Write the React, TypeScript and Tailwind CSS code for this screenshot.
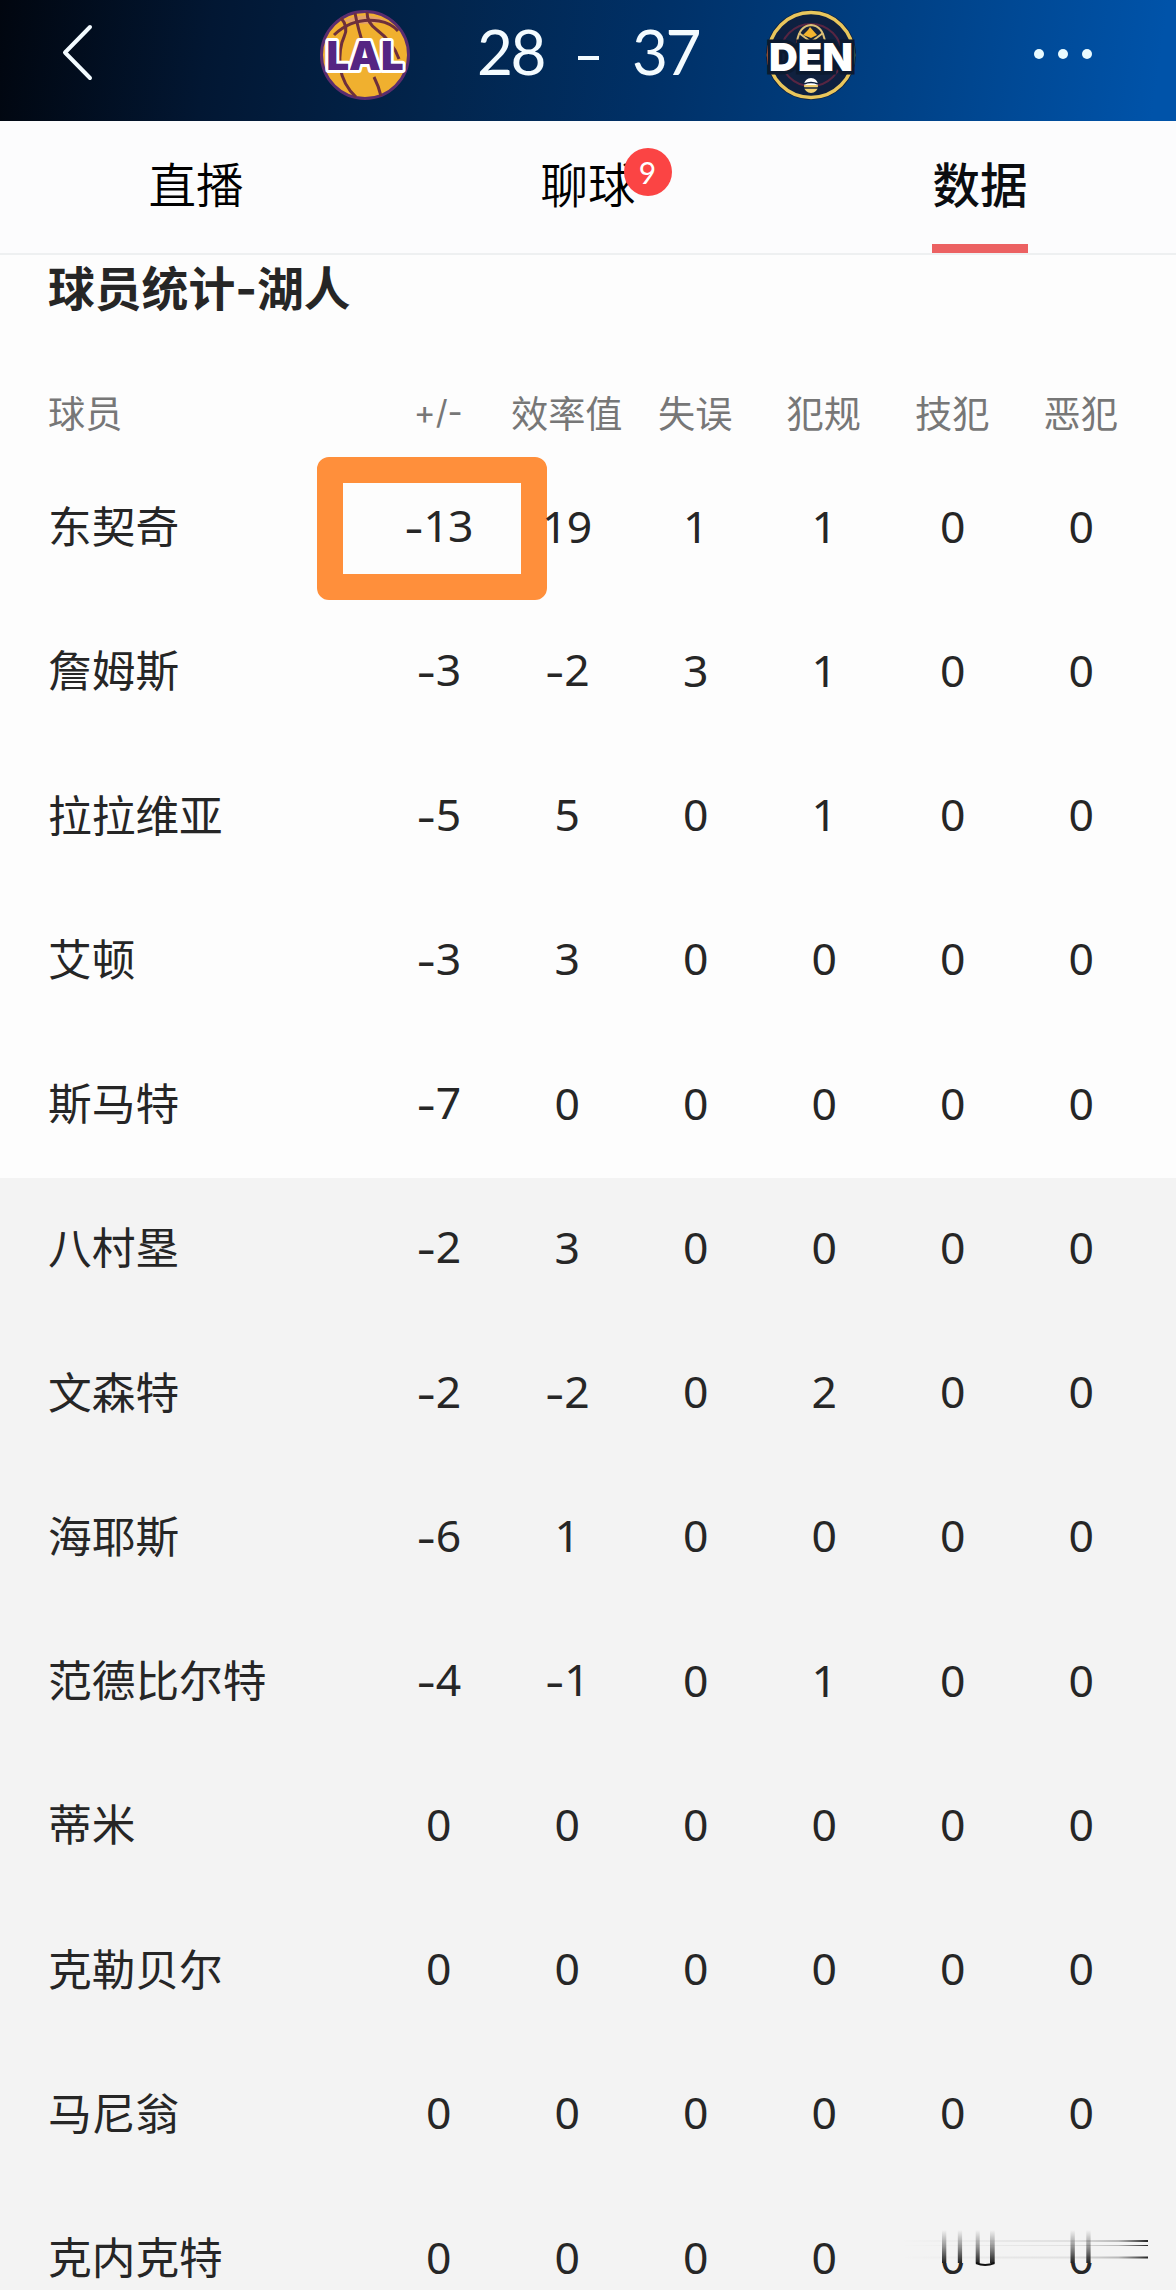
import clsx from "clsx";

/* -------------------------------------------------
   Data
   ------------------------------------------------- */
interface PlayerRow {
  name: string;
  stats: number[];
}

const columns = ["+/-", "效率值", "失误", "犯规", "技犯", "恶犯"];

const starters: PlayerRow[] = [
  { name: "东契奇", stats: [-13, 19, 1, 1, 0, 0] },
  { name: "詹姆斯", stats: [-3, -2, 3, 1, 0, 0] },
  { name: "拉拉维亚", stats: [-5, 5, 0, 1, 0, 0] },
  { name: "艾顿", stats: [-3, 3, 0, 0, 0, 0] },
  { name: "斯马特", stats: [-7, 0, 0, 0, 0, 0] },
];

const bench: PlayerRow[] = [
  { name: "八村塁", stats: [-2, 3, 0, 0, 0, 0] },
  { name: "文森特", stats: [-2, -2, 0, 2, 0, 0] },
  { name: "海耶斯", stats: [-6, 1, 0, 0, 0, 0] },
  { name: "范德比尔特", stats: [-4, -1, 0, 1, 0, 0] },
  { name: "蒂米", stats: [0, 0, 0, 0, 0, 0] },
  { name: "克勒贝尔", stats: [0, 0, 0, 0, 0, 0] },
  { name: "马尼翁", stats: [0, 0, 0, 0, 0, 0] },
  { name: "克内克特", stats: [0, 0, 0, 0, 0, 0] },
];

const tabs = [
  { label: "直播" },
  { label: "聊球", badge: 9 },
  { label: "数据", active: true },
];

/* -------------------------------------------------
   Logos
   ------------------------------------------------- */
const LakersLogo = () => (
  <svg className="h-[92px] w-[92px]" viewBox="0 0 92 92">
    <circle cx="46" cy="46" r="43.5" fill="#f0b02f" stroke="#5b2d6e" strokeWidth="3" />
    <path d="M24 12 Q46 1 68 12 Q46 18 24 12Z" fill="#e3a068" />
    <g fill="none" stroke="#6d2f3c" strokeWidth="3">
      <path d="M15 26 Q34 8 60 12 Q72 14 79 22" />
      <path d="M22 9 Q30 18 25 28 Q20 38 21 58 Q24 76 37 88" />
      <path d="M36 4 Q39 20 45 38 M55 68 Q60 78 62 87" />
      <path d="M48 3 Q48 14 58 21 Q74 33 80 50" />
    </g>
    <text
      x="46"
      y="61"
      textAnchor="middle"
      textLength="77"
      lengthAdjust="spacingAndGlyphs"
      fontSize="40"
      fontWeight="900"
      fill="#552583"
      stroke="#fff"
      strokeWidth="6"
      strokeLinejoin="round"
      paintOrder="stroke"
      className="font-[Inter,sans-serif]"
    >
      LAL
    </text>
  </svg>
);

const NuggetsLogo = () => (
  <svg className="h-[92px] w-[92px]" viewBox="0 0 92 92">
    <circle cx="46" cy="46" r="45" fill="#0e2040" />
    <circle cx="46" cy="46" r="42.5" fill="none" stroke="#e9c65c" strokeWidth="3.5" />
    <circle cx="46" cy="46" r="31" fill="#10213f" stroke="#572542" strokeWidth="2" />
    <path d="M32 33 Q34 17 46 16 Q58 17 60 33 L46 39Z" fill="#17233a" stroke="#dcc077" strokeWidth="2" />
    <path d="M34 24 L46 33 L58 24" fill="none" stroke="#dcc077" strokeWidth="2" />
    <path d="M38 26 L43 21 L45 18 L52 26 L46 29Z" fill="#f4b52f" />
    <circle cx="46" cy="77" r="7" fill="#f0cf70" />
    <path d="M39 76 A7 7 0 0 1 53 76Z" fill="#fff" />
    <path d="M39 75 Q46 72 53 75 M39 79 H53" fill="none" stroke="#10213f" strokeWidth="1.4" />
    <text
      x="46"
      y="61.5"
      textAnchor="middle"
      textLength="84"
      lengthAdjust="spacingAndGlyphs"
      fontSize="39"
      fontWeight="900"
      fill="#fff"
      stroke="#0c1a30"
      strokeWidth="7"
      paintOrder="stroke"
      className="font-[Inter,sans-serif]"
    >
      DEN
    </text>
  </svg>
);

/* -------------------------------------------------
   Header + tabs
   ------------------------------------------------- */
const ScoreHeader = () => (
  <header className="flex h-[121px] items-start bg-[linear-gradient(98deg,#01060f_0%,#021733_18%,#02254d_38%,#003066_55%,#004084_75%,#0053a9_98%)] text-[#f3fbff]">
    <svg className="mt-[23px] ml-[60px] h-[60px] w-[36px]" viewBox="0 0 36 60" fill="none" stroke="currentColor" strokeWidth="4" strokeLinecap="round" strokeLinejoin="round">
      <path d="M30 4 L5 29.5 L30 55" />
    </svg>
    <div className="mt-[9px] ml-[223px] flex w-[538px] items-start justify-between">
      <LakersLogo />
      <div className="flex h-[84px] w-[222px] items-center justify-between font-[Lato,sans-serif] text-[62px] tracking-[-2.5px]">
        <span>28</span>
        <span className="h-[4px] w-[21px] translate-y-[7px] bg-[#f3fbff]" />
        <span>37</span>
      </div>
      <NuggetsLogo />
    </div>
    <div className="mt-[49px] ml-[177px] flex gap-[14px]">
      <span className="h-[10px] w-[10px] rounded-full bg-[#e9fbff]" />
      <span className="h-[10px] w-[10px] rounded-full bg-[#e9fbff]" />
      <span className="h-[10px] w-[10px] rounded-full bg-[#e9fbff]" />
    </div>
  </header>
);

const TabBar = () => (
  <nav className="grid h-[134px] grid-cols-3 border-b-2 border-[#eef0f1] bg-[#fcfcfd]">
    {tabs.map((t) => (
      <div key={t.label} className="flex flex-col items-center justify-between">
        <div className="relative mt-[27px]">
          <span
            className={clsx(
              "block text-[47.5px] leading-[70px]",
              t.active ? "font-medium text-[#0b0d10]" : "font-[350] text-black"
            )}
          >
            {t.label}
          </span>
          {t.badge && (
            <span className="absolute top-0 left-[83px] flex h-[48px] w-[48px] items-center justify-center rounded-full bg-[#fb4444] font-[Lato,sans-serif] text-[30px] text-white">
              {t.badge}
            </span>
          )}
        </div>
        {t.active && <span className="h-[9px] w-[96px] bg-[#ec6162]" />}
      </div>
    ))}
  </nav>
);

/* -------------------------------------------------
   Stats table
   ------------------------------------------------- */
const StatValue = ({ value }: { value: number }) => (
  <span className="relative -top-[3px] font-['Noto_Sans',sans-serif] text-[44.5px] tracking-[-0.8px]">
    {value < 0 && <span className="relative top-[3px] font-[Inter,sans-serif]">-</span>}
    {Math.abs(value)}
  </span>
);

const Row = ({ row, highlight }: { row: PlayerRow; highlight?: boolean }) => (
  <div className="flex h-[144.25px] items-center pl-[48px] text-[#262626]">
    <span className="w-[326px] -translate-y-[4px] text-[43.7px]">{row.name}</span>
    {row.stats.map((s, i) => (
      <span key={i} className="relative flex h-[60px] w-[128.5px] items-center justify-center">
        {highlight && i === 0 && (
          <span className="absolute -top-[42px] -left-[57px] h-[143px] w-[230px] rounded-[12px] border-[26.5px] border-[#ff8f3b]" />
        )}
        <StatValue value={s} />
      </span>
    ))}
  </div>
);

// smeared strokes over the last two cells
const Smear = () => (
  <svg className="absolute top-[2224px] left-[896px] h-[46px] w-[256px]" viewBox="896 2224 256 46">
    <defs>
      <linearGradient id="fall" x1="0" y1="2230" x2="0" y2="2263" gradientUnits="userSpaceOnUse">
        <stop offset="0" stopColor="#222" stopOpacity="0" />
        <stop offset="0.5" stopColor="#222" stopOpacity="0.45" />
        <stop offset="1" stopColor="#222" />
      </linearGradient>
      <linearGradient id="run" x1="900" y1="0" x2="1148" y2="0" gradientUnits="userSpaceOnUse">
        <stop offset="0" stopColor="#333" stopOpacity="0" />
        <stop offset="0.7" stopColor="#333" stopOpacity="0.1" />
        <stop offset="0.88" stopColor="#222" stopOpacity="0.28" />
        <stop offset="1" stopColor="#000" stopOpacity="0.85" />
      </linearGradient>
    </defs>
    <rect x="900" y="2228" width="248" height="35" fill="#f3f3f3" />
    <g fill="url(#run)">
      <rect x="900" y="2240" width="248" height="2" />
      <rect x="900" y="2245" width="248" height="1" />
      <rect x="900" y="2256.5" width="248" height="2" />
    </g>
    <g fill="url(#fall)">
      <rect x="942" y="2230" width="4.3" height="33" />
      <rect x="957.8" y="2230" width="4.3" height="33" />
      <rect x="975.7" y="2230" width="4" height="33" />
      <rect x="990" y="2230" width="4.7" height="33" />
      <rect x="1070.5" y="2230" width="4.3" height="33" />
      <rect x="1086.3" y="2230" width="4.3" height="33" />
    </g>
    <path d="M976 2263 Q985 2267 994.5 2263" fill="none" stroke="#111" strokeWidth="2" />
  </svg>
);

/* -------------------------------------------------
   Main Page
   ------------------------------------------------- */
export default function App() {
  return (
    <div className="relative h-[2290px] w-[1176px] overflow-hidden bg-[#fdfdfd] font-['Noto_Sans_CJK_SC',sans-serif]">
      <ScoreHeader />
      <TabBar />

      <section>
        <h2 className="h-[62px] pl-[48px] text-[46.8px] leading-[62px] font-bold text-[#262626]">
          球员统计<span className="font-[Inter,sans-serif]">-</span>湖人
        </h2>
        <div className="mt-[65px] flex h-[75.75px] items-start pl-[48px] text-[37.2px] leading-[60px] text-[#777]">
          <span className="w-[326px]">球员</span>
          {columns.map((c) => (
            <span
              key={c}
              className={clsx(
                "w-[128.5px] text-center whitespace-nowrap",
                c === "+/-" && "font-[Inter,sans-serif] text-[33px]"
              )}
            >
              {c}
            </span>
          ))}
        </div>
        <div className="-mt-[1px]">
          {starters.map((p, i) => (
            <Row key={p.name} row={p} highlight={i === 0} />
          ))}
        </div>
        <div className="bg-[#f3f3f3]">
          {bench.map((p) => (
            <Row key={p.name} row={p} />
          ))}
        </div>
      </section>

      <Smear />
    </div>
  );
}
